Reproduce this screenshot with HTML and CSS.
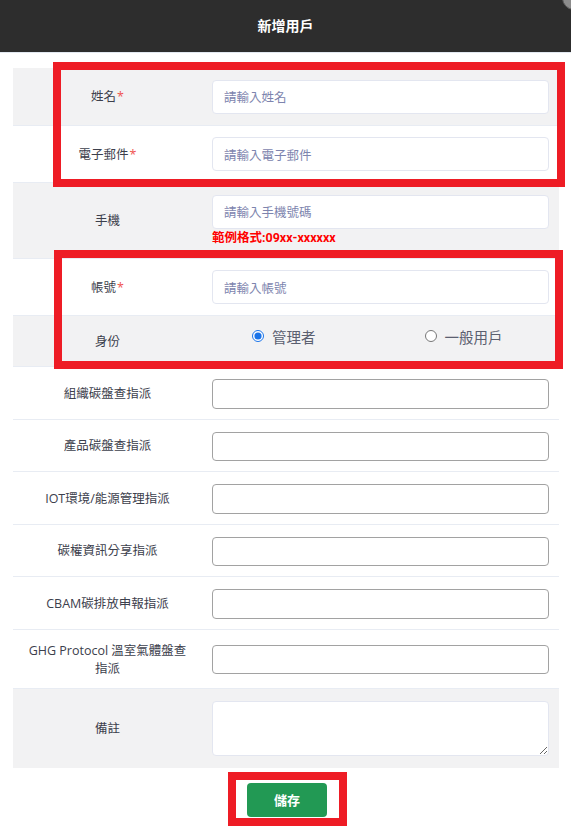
FILE: index.html
```html
<!DOCTYPE html>
<html lang="zh-Hant">
<head>
<meta charset="utf-8">
<title>新增用戶</title>
<link rel="stylesheet" href="styles.css">
</head>
<body>
<div class="modal">
  <div class="modal-header">
    <h1 class="modal-title">新增用戶</h1>
    <span class="close-btn"></span>
  </div>
  <form class="form">
    <div class="row gray">
      <div class="label">姓名<span class="req">*</span></div>
      <div class="field"><input class="input-a" type="text" placeholder="請輸入姓名"></div>
    </div>
    <div class="row">
      <div class="label">電子郵件<span class="req">*</span></div>
      <div class="field"><input class="input-a" type="text" placeholder="請輸入電子郵件"></div>
    </div>
    <div class="row gray">
      <div class="label">手機</div>
      <div class="field">
        <input class="input-a" type="text" placeholder="請輸入手機號碼">
        <div class="hint">範例格式:09xx-xxxxxx</div>
      </div>
    </div>
    <div class="row">
      <div class="label">帳號<span class="req">*</span></div>
      <div class="field"><input class="input-a" type="text" placeholder="請輸入帳號"></div>
    </div>
    <div class="row gray">
      <div class="label">身份</div>
      <div class="field radios">
        <label class="radio first"><input type="radio" name="role" checked><span>管理者</span></label>
        <label class="radio second"><input type="radio" name="role"><span>一般用戶</span></label>
      </div>
    </div>
    <div class="row">
      <div class="label">組織碳盤查指派</div>
      <div class="field assign"><input class="input-b" type="text"></div>
    </div>
    <div class="row">
      <div class="label">產品碳盤查指派</div>
      <div class="field assign"><input class="input-b" type="text"></div>
    </div>
    <div class="row">
      <div class="label">IOT環境/能源管理指派</div>
      <div class="field assign"><input class="input-b" type="text"></div>
    </div>
    <div class="row">
      <div class="label">碳權資訊分享指派</div>
      <div class="field assign"><input class="input-b" type="text"></div>
    </div>
    <div class="row">
      <div class="label">CBAM碳排放申報指派</div>
      <div class="field assign"><input class="input-b" type="text"></div>
    </div>
    <div class="row">
      <div class="label two-line">GHG Protocol 溫室氣體盤查<br>指派</div>
      <div class="field assign"><input class="input-b" type="text"></div>
    </div>
    <div class="row gray last">
      <div class="label">備註</div>
      <div class="field remark"><textarea class="textarea"></textarea></div>
    </div>
    <div class="actions">
      <button class="btn-save" type="button">儲存</button>
    </div>
  </form>
</div>
<div class="mark mark-1"></div>
<div class="mark mark-2"></div>
<div class="mark mark-3"></div>
</body>
</html>
```

FILE: styles.css
```css
* { box-sizing: border-box; }
html, body { margin: 0; padding: 0; background: #fff; }
body {
  width: 571px;
  height: 828px;
  overflow: hidden;
  position: relative;
  font-family: "Open Sans", "Noto Sans CJK TC", sans-serif;
}
.modal { width: 571px; }
.modal-header {
  height: 53px;
  background: #2d2d2d;
  border-bottom: 1px solid #e2e8f0;
  display: flex;
  align-items: center;
  justify-content: center;
  position: relative;
  overflow: hidden;
}
.modal-title {
  margin: 0;
  color: #fff;
  font-size: 14px;
  font-weight: 700;
  line-height: 20px;
  font-family: "Noto Sans CJK TC", sans-serif;
  padding-bottom: 2px;
}
.close-btn {
  position: absolute;
  right: -15px;
  top: -14px;
  width: 24px;
  height: 24px;
  border-radius: 50%;
  background: #8c8c8c;
  border: 1px solid #5a5a5a;
}
.form {
  margin: 15px 12px 0 13px;
}
.row {
  display: grid;
  grid-template-columns: 189px 1fr;
  align-items: center;
  border-bottom: 1px solid #e8ecf3;
}
.row.gray { background: #f2f2f3; }
.row.last { border-bottom: none; }
.label {
  text-align: center;
  font-size: 12.5px;
  line-height: 18px;
  color: #3c404c;
  padding: 2px 10px 0;
}
.label.two-line { padding: 12px 10px 10px; }
.req { color: #ef5350; margin-left: 1px; }
.field { padding: 11.5px 10px 11px; }
.input-a {
  display: block;
  width: 100%;
  height: 34px;
  border: 1px solid #e3e6f0;
  border-radius: 4px;
  background: #fff;
  padding: 0 11px;
  font-family: "Noto Sans CJK TC", sans-serif;
  font-size: 12.5px;
  color: #333;
  outline: none;
}
.input-a::placeholder { color: #7d84ae; }
.hint {
  color: #ff0000;
  font-weight: 700;
  font-size: 12.5px;
  line-height: 18px;
  font-family: "Roboto", "Noto Sans CJK TC", sans-serif;
}
.radios {
  display: flex;
  align-items: center;
  height: 50px;
  padding-top: 0;
  padding-bottom: 10px;
}
.radio {
  display: flex;
  align-items: center;
  font-size: 14.5px;
  color: #5b6070;
  font-family: "Noto Sans CJK TC", sans-serif;
}
.radio input { margin: 0 8px 0 0; width: 12px; height: 12px; accent-color: #1a73e8; }
.radio.first { margin-left: 40px; }
.radio.second { margin-left: 109px; }
.field.assign { padding: 12px 10px 10px; }
.input-b {
  display: block;
  width: 100%;
  height: 29.5px;
  border: 1px solid #a2a2a2;
  border-radius: 4px;
  background: #fff;
  outline: none;
}
.field.remark { padding: 12px 10px 12px; }
.textarea {
  display: block;
  width: 100%;
  height: 55px;
  border: 1px solid #e3e6f0;
  border-radius: 4px;
  background: #fff;
  resize: vertical;
  outline: none;
}
.actions {
  display: flex;
  justify-content: center;
  padding-top: 15px;
  padding-left: 2px;
}
.btn-save {
  width: 80px;
  height: 34px;
  border: none;
  border-radius: 4px;
  background: #229954;
  color: #fff;
  font-weight: 700;
  font-size: 13px;
  font-family: "Noto Sans CJK TC", sans-serif;
}
.mark {
  position: absolute;
  border: 8px solid #ee1c25;
  pointer-events: none;
}
.mark-1 { left: 53px; top: 62px; width: 512px; height: 125px; }
.mark-2 { left: 54px; top: 250px; width: 509px; height: 119px; }
.mark-3 { left: 228px; top: 772px; width: 119px; height: 54px; }
```
